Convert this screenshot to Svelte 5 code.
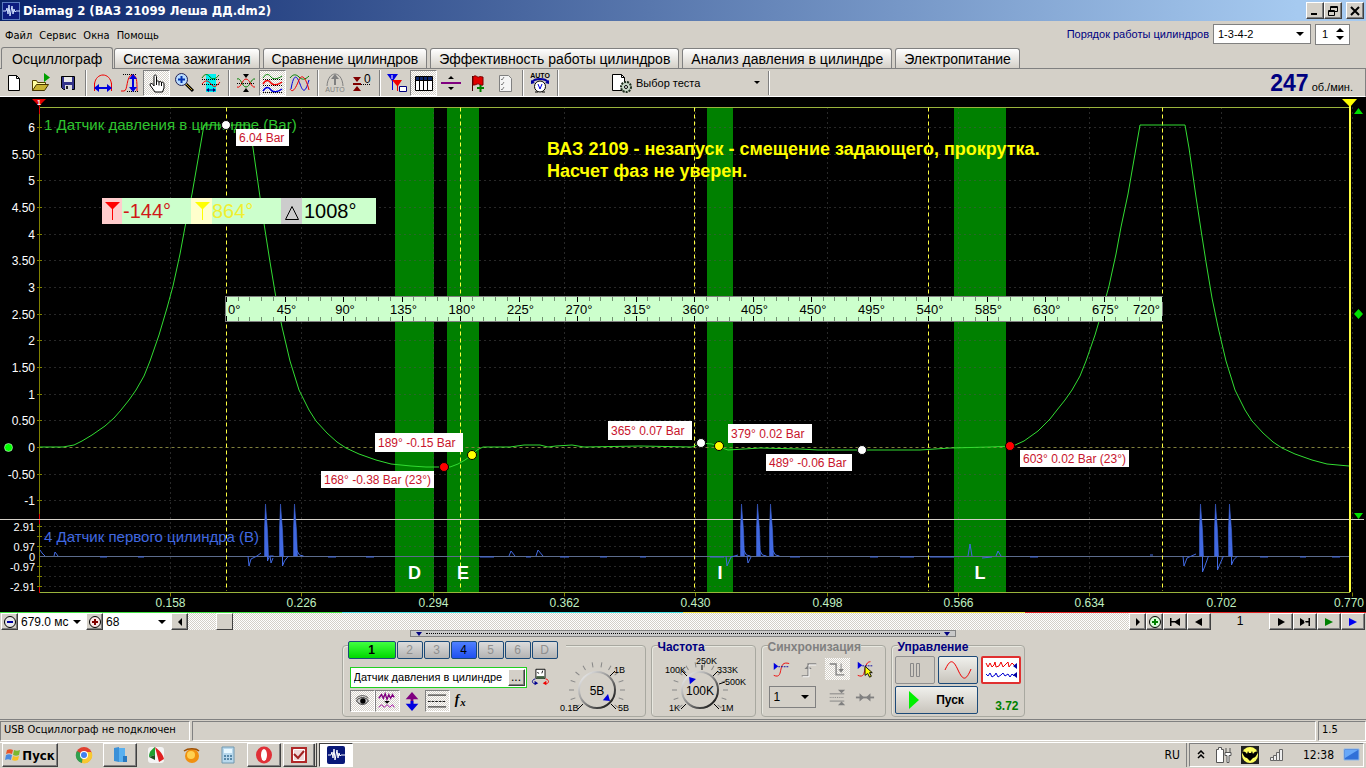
<script lang="ts">
  interface Tool {
    icon: string;
    title: string;
    pressed?: boolean;
  }

  const menu = ['Файл', 'Сервис', 'Окна', 'Помощь'];

  const tabs = [
    'Осциллограф',
    'Система зажигания',
    'Сравнение цилиндров',
    'Эффективность работы цилиндров',
    'Анализ давления в цилиндре',
    'Электропитание',
  ];
  let activeTab = $state(0);

  const toolGroups: Tool[][] = [
    [
      { icon: 'new', title: 'Новый' },
      { icon: 'open', title: 'Открыть' },
      { icon: 'save', title: 'Сохранить' },
    ],
    [
      { icon: 'scaleX', title: 'Масштаб по времени' },
      { icon: 'scaleY', title: 'Масштаб по уровню' },
      { icon: 'hand', title: 'Перемещение', pressed: true },
      { icon: 'zoom', title: 'Лупа' },
      { icon: 'region', title: 'Фрагмент' },
    ],
    [
      { icon: 'collapse', title: 'Совместить' },
      { icon: 'stack', title: 'Раздельно', pressed: true },
      { icon: 'overlay', title: 'Наложение' },
    ],
    [
      { icon: 'autoWave', title: 'Автомасштаб' },
      { icon: 'zero', title: 'Ноль' },
    ],
    [
      { icon: 'markers', title: 'Маркеры' },
      { icon: 'table', title: 'Таблица', pressed: true },
      { icon: 'level', title: 'Уровень' },
      { icon: 'flag', title: 'Закладка' },
      { icon: 'list', title: 'Список' },
    ],
    [{ icon: 'autoMeter', title: 'Авто' }],
  ];

  const icons: Record<string, string> = {
    new: '<path d="M5.500 3.500h8l3 3v12h-11z" fill="#fff" stroke="#000"/><path d="M13.500 3.500v3h3" fill="none" stroke="#000"/>',
    open: '<path d="M2.500 18.500v-10h4l1 2h8v2" fill="#ffffa0" stroke="#554400"/><path d="M2.500 18.500l4-6h12l-4 6z" fill="#c8b432" stroke="#443300"/><path d="M14 1l6 4.500-6 4.500z" fill="#00a000"/>',
    save: '<path d="M4.500 4.500h13v13h-11l-2-2z" fill="#33338a" stroke="#000"/><path d="M7 5h8v5H7z" fill="#e8e8e8"/><path d="M8 13h7v5H8z" fill="#ddd"/><path d="M9 14h2v3H9z" fill="#222"/>',
    scaleX: '<path d="M2.500 12C4 0 18 0 19.500 12" fill="none" stroke="#f00000"/><path d="M2.500 11v8M19.500 11v8" stroke="#f00000"/><path d="M3 16h16" stroke="#0000e0" stroke-width="2"/><path d="M2 16l5-4v8zM20 16l-5-4v8z" fill="#0000e0"/>',
    scaleY: '<path d="M2 19h3c4 0 2-15 8-16 5 0 5 6 5 16" fill="none" stroke="#f00000"/><path d="M4 2.500h14M8 19.500h12" stroke="#000" stroke-dasharray="1 1"/><path d="M14 6v11" stroke="#0000e0" stroke-width="2"/><path d="M14 2l-4 5h8zM14 20l-4-5h8z" fill="#0000e0"/>',
    hand: '<path d="M8 14V4.500c0-2 2.500-2 2.500 0V10c0-1.500 2.500-1.500 2.500.500 0-1.500 2.500-1.500 2.500.500 0-1.500 2.500-1 2.500 1v4l-1.500 4h-7.500l-5-7c0-2 2-2 3-.500z" fill="#fff" stroke="#000"/><path d="M10.500 10v3M13 10.500v3M15.500 11v3" stroke="#000"/>',
    zoom: '<circle cx="8.500" cy="7.500" r="6" fill="#b8dcff" stroke="#225"/><path d="M5 7.500h7M8.500 4v7" stroke="#0030b0" stroke-width="2"/><path d="M13 12l7 7" stroke="#000" stroke-width="3"/><path d="M13 12l6 6" stroke="#c8a020"/>',
    region: '<path d="M6 2h10v18H6z" fill="#00f0f0"/><path d="M2 6c3-5 6-4 8-1s6 2 9-2" fill="none" stroke="#008000"/><path d="M2 7.500h18M2 12.500h18" stroke="#000" stroke-dasharray="1 1"/><path d="M2 12c3-4 6-4 9 0s5 3 9-2" fill="none" stroke="#f00000"/><path d="M7 18h8" stroke="#000080"/><path d="M6 18l3-2v4zM16 18l-3-2v4z" fill="#000080"/>',
    collapse: '<path d="M2 7c4-2 5 8 9 8s5-9 9-8" fill="none" stroke="#008000"/><path d="M2 15c4 2 5-8 9-8s5 9 9 8" fill="none" stroke="#f00000"/><path d="M2 11.500h18" stroke="#000" stroke-dasharray="1 1"/><path d="M8 2h6l-3 4zM8 20h6l-3-4z" fill="#000"/>',
    stack: '<path d="M1 6c3-5 6-4 8-1s7 2 11-1" fill="none" stroke="#008000"/><path d="M1 12c3-5 6-4 8-1s7 2 11-1" fill="none" stroke="#f00000" stroke-width="1.500"/><path d="M1 19c3-5 6-4 8-1s7 2 11-1" fill="none" stroke="#0000e0" stroke-width="1.500"/><path d="M1 7.500h19M1 13.500h19M1 20.500h19" stroke="#000" stroke-dasharray="1 1"/>',
    overlay: '<path d="M1 6c3-4 6-4 9-1s6 3 10-1" fill="none" stroke="#008000"/><path d="M2 17C5 0 8 4 11 12s5 10 9-4" fill="none" stroke="#0000e0"/><path d="M1 17c3 5 6-2 9-9s7-2 10 10" fill="none" stroke="#f00000"/>',
    autoWave: '<path d="M3 14C4-2 18-2 19 14" fill="none" stroke="#808080"/><path d="M11 5v8" stroke="#808080" stroke-width="2"/><path d="M11 2L7 7h8z" fill="#808080"/><text x="11" y="20" font-size="7" text-anchor="middle" fill="#808080">AUTO</text>',
    zero: '<path d="M2 5h8l-4 5zM2 19h8l-4-5z" fill="#800000"/><path d="M2 12h8" stroke="#800000" stroke-width="2"/><path d="M10 12.500h10" stroke="#000" stroke-dasharray="1 1"/><text x="13" y="11" font-size="12" fill="#000">0</text>',
    markers: '<path d="M1 2h11l-5 7v9H6V9z" fill="#0000e0"/><path d="M6 8h10l-4 6v5h-1v-5z" fill="#f00000"/><path d="M13.500 14.500h7v5h-7z" fill="#fff" stroke="#000080"/><path d="M6 3v4" stroke="#fff"/>',
    table: '<path d="M2.500 4.500h17v14h-17z" fill="#fff" stroke="#000"/><path d="M3 5h16v3H3z" fill="#0a246a"/><path d="M3 8.500h16M6.500 5v13M10.500 5v13M14.500 5v13" stroke="#000"/>',
    level: '<path d="M1 11h20" stroke="#800080" stroke-width="2"/><path d="M8 7h6l-3-3zM8 15h6l-3 3z" fill="#000"/>',
    flag: '<path d="M5.500 4v15" stroke="#400"/><path d="M6 5c3-3 4 1 6 0s2 0 4 0v8c-3 1-4-2-6-1s-2 1-4 1z" fill="#e00000" stroke="#700"/><path d="M10 16h7M13.500 13v7" stroke="#008000" stroke-width="2"/>',
    list: '<path d="M5.500 3.500h9l3 3v13h-12z" fill="#f4f4f4" stroke="#808080"/><path d="M7 7l1 1 2-3M7 12l1 1 2-3M7 17l1 1 2-3" fill="none" stroke="#808080"/>',
    autoMeter: '<text x="11" y="6" font-size="7" font-weight="bold" text-anchor="middle" fill="#000">AUTO</text><path d="M3 10c3-4 13-4 16 0" fill="none" stroke="#0000a0" stroke-width="2"/><path d="M2 12V8l4 3zM20 12V8l-4 3z" fill="#0000a0"/><circle cx="11" cy="14.500" r="5.500" fill="#fff" stroke="#000"/><path d="M9 12l2 5 2-5" fill="none" stroke="#0000e0"/><path d="M6 20h3M13 20h3" stroke="#000"/>',
    test: '<path d="M1.500 2.500h9l3 3v13h-12z" fill="#fff" stroke="#000"/><path d="M10.500 2.500v3h3" fill="none" stroke="#000"/><circle cx="15" cy="15" r="5" fill="#c8d8c8" stroke="#203020" stroke-width="2" stroke-dasharray="2 1"/><circle cx="15" cy="15" r="1.500" fill="#fff" stroke="#000"/>',
    eye: '<path d="M5 11c2-5 11-5 13 0-3 5-10 5-13 0z" fill="#ccc" stroke="#222"/><circle cx="12" cy="11" r="3" fill="#000"/><path d="M4 9c3-5 11-5 14-1" fill="none" stroke="#444"/>',
    filter: '<path d="M2 8l3-4 2 4 2-5 2 6 2-5 2 4 2-4 2 3" fill="none" stroke="#800080" stroke-width="1.500"/><path d="M8 11h6l-3 3z" fill="#000"/><path d="M2 18l3-3 3 3 3-3 3 3 3-3 2 3" fill="none" stroke="#a000a0"/>',
    invert: '<path d="M11 5v13" stroke="#800080" stroke-width="3"/><path d="M11 1L4 9h14z" fill="#800080"/><path d="M11 22l-7-8h14z" fill="#0000e0"/><path d="M11 11v5" stroke="#0000e0" stroke-width="3"/>',
    lines: '<path d="M1 4.500h20M1 17.500h20" stroke="#000"/><path d="M1 11.500h20" stroke="#000" stroke-dasharray="3 1"/>',
    fx: '<text x="3" y="14" font-size="15" font-style="italic" font-weight="bold" font-family="Liberation Serif" fill="#000">f</text><text x="9" y="16" font-size="12" font-style="italic" font-weight="bold" font-family="Liberation Serif" fill="#000">x</text>',
    probe: '<path d="M6.500 2.500h10v10h-10z" fill="#fff" stroke="#000"/><path d="M7 10h9v3H7z" fill="#406040"/><path d="M8 6l2 1M14 4l-1 3" stroke="#000"/><path d="M6 13c-5 1-4 6 0 5" fill="none" stroke="#000090"/><path d="M5 15l4 3-4 2z" fill="#000090"/><path d="M17 13c5 1 4 6 0 5" fill="none" stroke="#f00000"/><path d="M18 15l-4 3 4 2z" fill="#f00000"/>',
    syncWave: '<path d="M3 18c7 3 7-3 8-7s2-8 9-6" fill="none" stroke="#f00000"/><path d="M3 4l5 4-5 4z" fill="#0000e0"/><path d="M8 8.500h12" stroke="#0000a0" stroke-dasharray="2 1"/>',
    edgeUp: '<path d="M3 18.500h7v-13h9" fill="none" stroke="#808080" stroke-width="1.500"/><path d="M10 7l-4 4h8z" fill="#808080"/><path d="M4 19.500h7v-13h8" fill="none" stroke="#fff"/>',
    edgeDown: '<path d="M3 5.500h7v12h9" fill="none" stroke="#808080" stroke-width="1.500"/><path d="M15.500 5v9" stroke="#808080"/><path d="M15.500 15l-3-4h6z" fill="#808080"/>',
    syncCursor: '<path d="M3 18c7 3 7-3 8-7s2-8 6-8" fill="none" stroke="#f00000"/><path d="M3 3l5 4-5 4z" fill="#0000e0"/><path d="M8 7.500h12" stroke="#0000a0" stroke-dasharray="2 1"/><path d="M11 8v10l3-2 2 4 2-1-2-4h3z" fill="#ffff00" stroke="#000"/>',
    syncLevel: '<path d="M3 7.500h16M3 15.500h16" stroke="#808080"/><path d="M3 11.500h16" stroke="#808080" stroke-dasharray="1 1"/><path d="M12 3h8l-4 4zM12 20h8l-4-4z" fill="#808080"/>',
    syncHold: '<path d="M1 11.500h20" stroke="#808080" stroke-width="2"/><path d="M5 7l5 4.500L5 16zM17 7l-5 4.500 5 4.500z" fill="#808080"/>',
  };

  // scope geometry, in drawing units
  const LEFT = 39.5;
  const RIGHT = 1350;
  const TOP = 107.5;
  const BOTTOM = 592.5;
  const SPLIT = 519.5;
  const ZERO = 447.5;
  const ZERO4 = 556.5;

  const pressureTicks = [
    '6', '5.50', '5', '4.50', '4', '3.50', '3', '2.50', '2', '1.50', '1', '0.50', '0', '-0.50', '-1',
  ].map((text) => ({ text, y: Math.round(447 - (Number(text) * 160) / 3) + 0.5 }));

  const syncTicks = [
    { text: '2.91', y: 526.5 },
    { text: '0.97', y: 546.5 },
    { text: '0', y: 556.5 },
    { text: '-0.97', y: 566.5 },
    { text: '-2.91', y: 586.5 },
  ];
  const syncGrid = [526.5, 536.5, 546.5, 566.5, 576.5, 586.5];

  const timeTicks = ['0.158', '0.226', '0.294', '0.362', '0.430', '0.498', '0.566', '0.634', '0.702', '0.770'].map(
    (text, i) => ({ text, x: Math.round(170 + (i * 394) / 3) + 0.5 })
  );

  const phases = [
    { x: 395, w: 39, name: 'D' },
    { x: 447, w: 32, name: 'E' },
    { x: 707, w: 26, name: 'I' },
    { x: 954, w: 52, name: 'L' },
  ];

  const strokes = [226.5, 460.5, 694.5, 928.5, 1162.5];

  const rise = [
    [121, 410], [129, 400], [136, 390], [144, 376], [150, 361], [159, 335], [167, 308], [173, 286],
    [180, 254], [185, 227], [192, 194], [204, 125], [249, 125],
  ];
  const fall = [
    [249, 125], [253, 148], [260, 197], [265, 230], [270, 262], [276, 298], [282, 327], [290, 361], [299, 390],
    [309, 410], [316, 421], [327, 433], [337, 442], [346, 448], [359, 454], [376, 460], [391, 464],
  ];
  const nextCycle = (pts: number[][]) => pts.map(([x, y]) => [x + 936, y]);

  const pressure = [
    [40, 447], [63, 447], [74, 445], [82, 441], [92, 435], [105, 426], [114, 418],
    ...rise, ...fall,
    [411, 466], [426, 467], [450, 467], [458, 464], [465, 460], [472, 455], [477, 450], [483, 447],
    [510, 447], [524, 445], [540, 445], [548, 447], [556, 446], [572, 445], [584, 447], [640, 446], [692, 447],
    [701, 443], [712, 444], [722, 448], [728, 450], [760, 448], [800, 449], [818, 450], [920, 450], [950, 448], [990, 447],
    [1013, 446], [1024, 441], [1038, 431], [1050, 419],
    ...nextCycle(rise), ...nextCycle(fall), [1349, 466],
  ].map((p) => p.join(',')).join(' ');

  // x of each spike and how low it swings afterwards
  const pulses = [
    [265.5, 561], [280.5, 566], [294.5, 556], [741.5, 556], [757.5, 556], [770.5, 556],
    [1200.5, 572], [1215.5, 570], [1229.5, 565],
  ];
  const spikePath = pulses.map(([x]) => `M${x - 1} 556V528L${x} 504L${x + 2} 530L${x + 3} 556z`).join('');
  const tailPath = pulses
    .map(([x, low]) => (low > 556 ? `M${x + 2} 556V${low}l2 -5L${x + 8} 556` : `M${x + 2} 550l3 5l4 1`))
    .join('');
  const noisePath =
    'M40 550l2 3 3 3M54 556l1-4 3 4M100 557h7M138 557h6M248 556l1 10 2-7 6-3 4-3M270 556l1 7 2-5M328 557h8M366 557h8' +
    'M480 557h14M509 556l2-5 4 5M526 557h5M536 556l2-6 5 6M560 557h9M600 557h7M640 557h6' +
    'M710 557h14M726 556l1 10 4-9 7-2M747 556l1 7 3-6M790 557h10M870 557h8M900 557h14M930 557h24M968 556l2-12 2 12M982 558l10-1' +
    'M996 556l2-5 3 5M1030 557h8M1150 555h3M1183 556l1 10 3-8 9-4M1260 557h8M1300 557h6M1332 557h8';

  const ruler = Array.from({ length: 81 }, (_, i) => ({ x: Math.round(226 + i * 11.7) + 0.5, major: i % 5 === 0 }));
  const angles = Array.from({ length: 17 }, (_, i) => i * 45);

  const dots = [
    { x: 226, y: 125, fill: '#fff' },
    { x: 444, y: 467, fill: '#f00' },
    { x: 472, y: 455, fill: '#ff0' },
    { x: 701, y: 443, fill: '#fff' },
    { x: 719, y: 446, fill: '#ff0' },
    { x: 862, y: 450, fill: '#fff' },
    { x: 1010, y: 446, fill: '#f00' },
  ];

  const notes = [
    { x: 236, y: 129, w: 53, h: 17, text: '6.04 Bar' },
    { x: 375, y: 433, w: 88, h: 19, text: '189° -0.15 Bar' },
    { x: 321, y: 471, w: 113, h: 17, text: '168° -0.38 Bar (23°)' },
    { x: 608, y: 421, w: 84, h: 19, text: '365° 0.07 Bar' },
    { x: 728, y: 424, w: 84, h: 19, text: '379° 0.02 Bar' },
    { x: 766, y: 454, w: 86, h: 17, text: '489° -0.06 Bar' },
    { x: 1020, y: 450, w: 109, h: 17, text: '603° 0.02 Bar (23°)' },
  ];

  const channels = ['1', '2', '3', '4', '5', '6', 'D'];

  // short scale marks around a knob, angle in degrees from the top
  const knobMarks = Array.from({ length: 14 }, (_, i) => -130 + i * 20);
</script>

{#snippet icon(name: string)}
  <svg class="icon" viewBox="0 0 22 22" aria-hidden="true">{@html icons[name]}</svg>
{/snippet}

{#snippet knob(value: string, pointer: number)}
  {#each knobMarks as a}
    <path d="M45 13v-5" stroke="#888" transform="rotate({a} 45 36)" />
  {/each}
  <circle cx="45" cy="36" r="18" fill="#d4d0c8" stroke="url(#rim)" stroke-width="2" />
  <path d="M41 25h8l-4-6z" fill="#0000e0" transform="rotate({pointer} 45 36)" />
  <text class="value" x="45" y="41">{value}</text>
{/snippet}

<div class="window">
  <header class="titlebar">
    <svg class="logo" viewBox="0 0 18 18" aria-hidden="true">
      <rect width="18" height="18" fill="#5a7ac0" />
      <rect x="1" y="1" width="16" height="16" fill="#0c1c80" />
      <path d="M1 9h3l1-3 1 6 1-9 1 11 2-10 1 8 1-5 1 3 1-1h4" fill="none" stroke="#cfe0ff" />
    </svg>
    <h1>Diamag 2 (ВАЗ 21099 Леша ДД.dm2)</h1>
    <div class="controls">
      <button aria-label="Свернуть"><svg viewBox="0 0 12 12"><path d="M2 9h6" stroke="#000" stroke-width="2" /></svg></button>
      <button aria-label="Восстановить">
        <svg viewBox="0 0 12 12"><path d="M3.500 5V1.500h7v5H8M1.500 5.500h6v5h-6zM3 2.500h8M1 6.500h7" fill="none" stroke="#000" /></svg>
      </button>
      <button class="close" aria-label="Закрыть"><svg viewBox="0 0 12 12"><path d="M2 2l8 8M10 2l-8 8" stroke="#000" stroke-width="2" /></svg></button>
    </div>
  </header>

  <div class="menubar">
    <nav>
      {#each menu as item}
        <button>{item}</button>
      {/each}
    </nav>
    <div class="order">
      <label for="order">Порядок работы цилиндров</label>
      <select id="order" class="combo order-select">
        <option>1-3-4-2</option>
      </select>
      <div class="spin">
        <input aria-label="Цилиндр" value="1" />
        <svg viewBox="0 0 8 14" aria-hidden="true"><path d="M0 5h8L4 1zM0 9h8l-4 4z" /></svg>
      </div>
    </div>
  </div>

  <div class="tabs" role="tablist">
    {#each tabs as tab, i}
      <button role="tab" aria-selected={i === activeTab} class:active={i === activeTab} onclick={() => (activeTab = i)}>{tab}</button>
    {/each}
  </div>

  <div class="toolbar">
    {#each toolGroups as group}
      <div class="tools">
        {#each group as tool}
          <button class="tool" class:pressed={tool.pressed} title={tool.title}>{@render icon(tool.icon)}</button>
        {/each}
      </div>
    {/each}
    <button class="test">
      {@render icon('test')}
      <span>Выбор теста</span>
      <svg class="arrow" viewBox="0 0 6 4" aria-hidden="true"><path d="M0 0h6L3 3z" /></svg>
    </button>
    <div class="rpm"><b>247</b><span>об./мин.</span></div>
  </div>

  <main class="scope">
    <svg viewBox="0 97 1366 515" role="img" aria-label="Осциллограмма">
      <rect y="97" width="1366" height="515" fill="#000" />

      {#each phases as p}
        <rect x={p.x} y="108" width={p.w} height="484" fill="#008000" />
      {/each}

      <g class="grid">
        {#each pressureTicks as t}
          <path d="M{LEFT} {t.y}H{RIGHT}" class:zero={t.text === '0'} />
        {/each}
        {#each syncGrid as y}
          <path d="M{LEFT} {y}H{RIGHT}" />
        {/each}
        {#each timeTicks as t}
          <path d="M{t.x} {TOP}V{BOTTOM}" />
        {/each}
      </g>

      <g class="axis">
        <path d="M{LEFT} {TOP}V{BOTTOM}" />
        {#each pressureTicks as t}
          <path d="M37 {t.y}h5" />
        {/each}
        {#each syncGrid as y}
          <path d="M37 {y}h5" />
        {/each}
        {#each timeTicks as t}
          <path d="M{t.x} {BOTTOM}v4" />
        {/each}
      </g>
      <path d="M{LEFT} {TOP}H{RIGHT}M{LEFT} {BOTTOM}H{RIGHT}" stroke="#9ab43c" />
      <path d="M{LEFT} 514v10M{LEFT} 587v6M{LEFT} 106v8" stroke="#e00000" />

      <g class="scale">
        {#each pressureTicks as t}
          <text x="35" y={t.y + 4}>{t.text}</text>
        {/each}
        {#each syncTicks as t}
          <text class="dense" x="35" y={t.y + 4}>{t.text}</text>
        {/each}
      </g>
      <g class="time">
        {#each timeTicks as t, i}
          {#if i === timeTicks.length - 1}
            <text class="last" x="1364" y="607">{t.text}</text>
          {:else}
            <text x={t.x} y="607">{t.text}</text>
          {/if}
        {/each}
      </g>

      <text class="trace" x="44" y="130" fill="#2fc52f">1 Датчик давления в цилиндре (Bar)</text>
      <text class="trace" x="44" y="542" fill="#4169e1">4 Датчик первого цилиндра (В)</text>

      <path d="M0 {SPLIT}H1364" stroke="#d4d0c8" />
      <path d="M{LEFT} {ZERO4}H{RIGHT}" stroke="#5c6c8c" />
      <path d="{noisePath}{tailPath}" fill="none" stroke="#4169e1" />
      <path d={spikePath} fill="#4169e1" stroke="#4169e1" stroke-width="0.500" />
      {#each strokes as x}
        <path d="M{x} {TOP}V591" stroke="#ffff40" stroke-dasharray="4 3" />
      {/each}
      <polyline points={pressure} fill="none" stroke="#32dc32" />

      {#each phases as p}
        <text class="phase" x={p.x + p.w / 2} y="579">{p.name}</text>
      {/each}

      <!-- markers -->
      <path d="M32 99h14l-7 7z" fill="#e00000" />
      <text x="39" y="105" font-size="7" font-weight="bold" text-anchor="middle" fill="#fff">1</text>
      <path d="M1350 106V592" stroke="#ffff40" stroke-width="2" />
      <path d="M1342 99h15l-7 8z" fill="#ff0" />
      <path d="M1354 114h9l-4.500-6zM1354 513h9l-4.500 6zM1358.500 309l4.500 5-4.500 5-4.500-5z" fill="#00e000" />
      <circle cx="8.500" cy={ZERO} r="4" fill="#00ff00" stroke="#fff" stroke-width="0.500" />

      {#each dots as d}
        <circle cx={d.x} cy={d.y} r="4.500" fill={d.fill} stroke="#000" />
      {/each}

      <!-- cursor readout -->
      <g class="readout">
        <rect x="102" y="198" width="274" height="26" fill="#ccffcc" />
        <rect x="102" y="198" width="20" height="26" fill="#ffcccc" />
        <rect x="191" y="198" width="21" height="26" fill="#ffffcc" />
        <rect x="281" y="198" width="21" height="26" fill="#ccc" />
        <path d="M105 202h15l-7 7v11h-1v-11z" fill="#f00" />
        <path d="M195 202h15l-7 7v11h-1v-11z" fill="#ff0" />
        <path d="M285.500 219.500h13l-6.500-13z" fill="none" stroke="#000" />
        <text x="123" y="218" fill="#d01818">-144°</text>
        <text x="212" y="218" fill="#f0f030">864°</text>
        <text x="304" y="218" fill="#000">1008°</text>
      </g>

      <!-- degree ruler -->
      <rect x="225.500" y="296.500" width="937" height="25" fill="#ccffcc" stroke="#808080" />
      {#each ruler as r}
        <path d="M{r.x} 297v{r.major ? 5 : 4}M{r.x} 321v-{r.major ? 5 : 4}" stroke={r.major ? '#000' : '#709070'} />
      {/each}
      <g class="angles">
        {#each angles as a, i}
          {#if i === 0}
            <text x="228" y="314" text-anchor="start">{a}°</text>
          {:else if i === 16}
            <text x="1160" y="314" text-anchor="end">{a}°</text>
          {:else}
            <text x={228 + i * 58.5} y="314" text-anchor="middle">{a}°</text>
          {/if}
        {/each}
      </g>

      {#each notes as n}
        <rect x={n.x} y={n.y} width={n.w} height={n.h} fill="#fff" />
        <text class="note" x={n.x + 3} y={Math.round(n.y + n.h / 2 + 4)}>{n.text}</text>
      {/each}

      <g class="comment">
        <text x="547" y="155">ВАЗ 2109 - незапуск - смещение задающего, прокрутка.</text>
        <text x="547" y="177">Насчет фаз не уверен.</text>
      </g>
    </svg>
  </main>

  <div class="overview"><i></i><i></i><i></i><i></i></div>

  <div class="scroller">
    <button class="raised" aria-label="Уменьшить">
      <svg viewBox="0 0 14 14"><circle cx="7" cy="7" r="5.500" fill="#e8e8e8" stroke="#000" /><path d="M4 7h6" stroke="#0000a0" stroke-width="2" /></svg>
    </button>
    <select class="flat" aria-label="Длительность"><option>679.0 мс</option></select>
    <button class="raised" aria-label="Увеличить">
      <svg viewBox="0 0 14 14"><circle cx="7" cy="7" r="5.500" fill="#ffe8e8" stroke="#000" /><path d="M4 7h6M7 4v6" stroke="#800000" stroke-width="2" /></svg>
    </button>
    <select class="flat" aria-label="Масштаб"><option>68</option></select>
    <button class="raised" aria-label="Влево"><svg viewBox="0 0 14 14"><path d="M9 3v8L5 7z" /></svg></button>
    <div class="track"><div class="thumb"></div></div>
    <button class="raised" aria-label="Вправо"><svg viewBox="0 0 14 14"><path d="M5 3v8l4-4z" /></svg></button>
    <button class="raised" aria-label="Добавить кадр">
      <svg viewBox="0 0 14 14"><circle cx="7" cy="7" r="5.500" fill="#d8ffd8" stroke="#000" /><path d="M4 7h6M7 4v6" stroke="#008000" stroke-width="2" /></svg>
    </button>
    <button class="raised wide" aria-label="Первый кадр"><svg viewBox="0 0 14 14"><path d="M12 3v8L6 7zM2 3h1.500v8H2zM3 6h5v1.500H3z" /></svg></button>
    <button class="raised wide" aria-label="Предыдущий кадр"><svg viewBox="0 0 14 14"><path d="M10 3v8L3 7z" /></svg></button>
    <output>1</output>
    <button class="raised wide" aria-label="Следующий кадр"><svg viewBox="0 0 14 14"><path d="M4 3v8l7-4z" /></svg></button>
    <button class="raised wide" aria-label="Последний кадр"><svg viewBox="0 0 14 14"><path d="M2 3v8l6-4zM10.500 3H12v8h-1.500zM6 6h5v1.500H6z" /></svg></button>
    <button class="raised wide" aria-label="Воспроизвести"><svg viewBox="0 0 14 14"><path d="M3 3v8l8-4z" fill="#008000" /></svg></button>
    <button class="raised wide" aria-label="Запись"><svg viewBox="0 0 14 14"><path d="M3 3v8l8-4z" fill="#0000f0" /></svg></button>
  </div>

  <button class="splitter" aria-label="Скрыть панель">
    <svg viewBox="0 0 6 4"><path d="M0 0h6L3 4z" /></svg>
    <span></span>
    <svg viewBox="0 0 6 4"><path d="M0 0h6L3 4z" /></svg>
  </button>

  <section class="panel">
    <div class="group channel" role="group" aria-label="Канал">
      <div class="channels">
        {#each channels as c, i}
          <button class:first={i === 0} class:blue={i === 3}>{c}</button>
        {/each}
      </div>
      <div class="channel-settings">
        <div class="row">
          <div class="sensor">
            <input aria-label="Датчик" value="Датчик давления в цилиндре" />
            <button class="raised" aria-label="Выбрать датчик">...</button>
          </div>
          <button class="tool small" title="Датчик">{@render icon('probe')}</button>
        </div>
        <div class="row">
          <button class="tool small pressed" title="Видимость">{@render icon('eye')}</button>
          <button class="tool small pressed" title="Фильтр">{@render icon('filter')}</button>
          <button class="tool small" title="Инверсия">{@render icon('invert')}</button>
          <button class="tool small pressed" title="Линии">{@render icon('lines')}</button>
          <button class="tool small" title="Функция">{@render icon('fx')}</button>
        </div>
      </div>
      <svg class="knob" viewBox="0 0 90 66" role="img" aria-label="Предел 5В">
        <defs>
          <linearGradient id="rim" x1="0" y1="0" x2="1" y2="1">
            <stop offset="0" stop-color="#fff" />
            <stop offset="0.500" stop-color="#888" />
            <stop offset="1" stop-color="#000" />
          </linearGradient>
        </defs>
        {@render knob('5В', 130)}
        <path d="M58 22l5-5M31 50l-5 5M59 50l5 5" stroke="#000" />
        <text x="62" y="19">1В</text>
        <text x="8" y="57">0.1В</text>
        <text x="66" y="57">5В</text>
      </svg>
    </div>

    <div class="group rate" role="group" aria-label="Частота">
      <span class="caption">Частота</span>
      <svg class="knob" viewBox="0 0 90 66" role="img" aria-label="Частота 100K">
        {@render knob('100K', -40)}
        <path d="M47 16v-5M32 22l-5-5M58 22l5-5M64 30l6-2M31 50l-5 5M59 50l5 5" stroke="#000" />
        <text x="41" y="10">250K</text>
        <text x="10" y="19">100K</text>
        <text x="62" y="19">333K</text>
        <text x="70" y="31">500K</text>
        <text x="14" y="57">1K</text>
        <text x="66" y="57">1M</text>
      </svg>
    </div>

    <div class="group sync" role="group" aria-label="Синхронизация">
      <span class="caption">Синхронизация</span>
      <div class="row">
        <button class="tool small" title="Уровень">{@render icon('syncWave')}</button>
        <button class="tool small" title="Фронт">{@render icon('edgeUp')}</button>
        <button class="tool small hatched" title="Спад">{@render icon('edgeDown')}</button>
        <button class="tool small" title="Захват">{@render icon('syncCursor')}</button>
      </div>
      <div class="row">
        <select class="combo source" aria-label="Источник"><option>1</option></select>
        <button class="tool small" title="Порог">{@render icon('syncLevel')}</button>
        <button class="tool small" title="Удержание">{@render icon('syncHold')}</button>
      </div>
    </div>

    <div class="group control" role="group" aria-label="Управление">
      <span class="caption">Управление</span>
      <div class="row">
        <button class="mode off" aria-label="Пауза">
          <svg viewBox="0 0 36 24"><path d="M13.500 5.500h3v13h-3zM19.500 5.500h3v13h-3z" fill="none" stroke="#888" /></svg>
        </button>
        <button class="mode" aria-label="Одиночный">
          <svg viewBox="0 0 36 24"><path d="M5 12C10 1 13 1 18 12s8 11 13-1" fill="none" stroke="#f00000" /></svg>
        </button>
        <button class="mode on" aria-label="Непрерывный">
          <svg viewBox="0 0 36 24">
            <path d="M3 5l2 4 2-4 2 4 2-2 1-3 1 5 3-1 2-4 2 5 2-2 3-3 1 5 3-4 3 3" fill="none" stroke="#f00000" />
            <path d="M3 16l2 2 2-3 2 4 3-2 1-2 2 4 3-2 2-2 2 3 3-2 2 3 2-3 2 2" fill="none" stroke="#0000d0" />
            <path d="M34 5l-4 3 4 3zM34 14l-4 3 4 3z" fill="#0000a0" />
          </svg>
        </button>
      </div>
      <div class="row">
        <button class="mode start"><svg viewBox="0 0 12 20" aria-hidden="true"><path d="M1 1v18l10-9z" fill="#00f000" /></svg><b>Пуск</b></button>
        <output class="version">3.72</output>
      </div>
    </div>
  </section>

  <footer class="status">
    <span class="state">USB Осциллограф не подключен</span>
    <span class="fill"></span>
    <span class="build">1.5</span>
  </footer>

  <div class="taskbar">
    <button class="raised go">
      <svg viewBox="0 0 16 16" aria-hidden="true">
        <path d="M2 3c2-1 4-1 6 0L7 7C5 6 3 6 1 7z" fill="#e8552a" />
        <path d="M9 3c2 1 4 1 6 0l-1 5c-2 1-4 1-6 0z" fill="#7ab82e" />
        <path d="M1 8c2-1 4-1 6 0l-1 5c-2-1-4-1-6 0z" fill="#4a8ae0" />
        <path d="M8 9c2 1 4 1 6 0l-1 4c-2 1-4 1-6 0z" fill="#f8c020" />
      </svg>
      <b>Пуск</b>
    </button>
    <button class="task" aria-label="Chrome">
      <svg viewBox="0 0 18 18">
        <circle cx="9" cy="9" r="8" fill="#e04030" />
        <path d="M9 9L2 5a8 8 0 0 0 5 12z" fill="#30a050" />
        <path d="M9 9h-1l-1 8A8 8 0 0 0 16.500 6H9z" fill="#f8c830" />
        <circle cx="9" cy="9" r="4" fill="#fff" /><circle cx="9" cy="9" r="3" fill="#4080f0" />
      </svg>
    </button>
    <button class="task raised" aria-label="Проводник">
      <svg viewBox="0 0 18 18"><path d="M3 2l5-1v15l-5-1z" fill="#3a90d8" /><path d="M8 2h6v14H8z" fill="#58b0f0" /><path d="M12 10h4v6h-4z" fill="#2878c0" /></svg>
    </button>
    <button class="task" aria-label="FastStone">
      <svg viewBox="0 0 18 18"><rect x="1" y="1" width="16" height="16" rx="3" fill="#f4f4f4" /><path d="M2 11C2 6 4 4 8 1v8z" fill="#20a030" /><path d="M8 1c4 3 8 7 9 12l-5 3z" fill="#e02020" /><path d="M2 11l6-2v5z" fill="#205020" /></svg>
    </button>
    <button class="task" aria-label="Плеер">
      <svg viewBox="0 0 18 18"><circle cx="9" cy="10" r="7" fill="#f09010" /><circle cx="8" cy="9" r="4" fill="#ffd050" /><path d="M1 5c4-3 12-3 15 0" fill="none" stroke="#a05000" stroke-width="1.500" /></svg>
    </button>
    <button class="task" aria-label="Калькулятор">
      <svg viewBox="0 0 18 18"><path d="M3 1h12v16H3z" fill="#b8d8ec" stroke="#7098b0" /><path d="M5 3h8v4H5z" fill="#e8f8ff" /><path d="M5 10h8M5 13h8" stroke="#5888a8" stroke-width="2" stroke-dasharray="2 1" /></svg>
    </button>
    <button class="task raised" aria-label="Opera">
      <svg viewBox="0 0 18 18"><ellipse cx="9" cy="9" rx="8" ry="8.500" fill="#e03038" /><ellipse cx="9" cy="9" rx="3" ry="6" fill="#fff" /></svg>
    </button>
    <button class="task raised double" aria-label="Журнал">
      <svg viewBox="0 0 18 18"><rect x="1" y="1" width="16" height="16" fill="#b02828" /><path d="M3.500 3.500h11v11h-11z" fill="#f0d8d8" stroke="#fff" /><path d="M4 8l4 4 6-7" fill="none" stroke="#a02020" stroke-width="2" /></svg>
    </button>
    <button class="task current" aria-label="Diamag 2">
      <svg viewBox="0 0 18 18"><rect width="18" height="18" rx="2" fill="#081878" /><path d="M1 9h3l1-3 1 6 1-9 1 11 2-10 1 8 1-5 1 3 1-1h4" fill="none" stroke="#fff" /></svg>
    </button>
    <span class="lang">RU</span>
    <div class="tray">
      <svg class="chevron" viewBox="0 0 8 10" aria-hidden="true"><path d="M1 4l3-3 3 3M1 8l3-3 3 3" fill="none" stroke="#000" stroke-width="1.500" /></svg>
      <svg viewBox="0 0 18 18" aria-hidden="true"><path d="M2.500 3.500h2v-2h3v2h2v13h-7z" fill="#fff" stroke="#555" /><path d="M12 2v4M16 2v4M11 6.500h6v3h-2v7h-2v-7h-2z" fill="#fff" stroke="#555" /></svg>
      <svg viewBox="0 0 18 18" aria-hidden="true"><rect width="18" height="18" fill="#202020" /><ellipse cx="9" cy="9" rx="8" ry="8" fill="#ffff60" /><path d="M1 6c2-1 4 0 5 2l1-3 1 2h2l1-2 1 3c1-2 3-3 5-2-1 3-3 6-5 6l-3 3-3-3c-2 0-4-3-5-6z" fill="#000" /></svg>
      <svg viewBox="0 0 18 18" aria-hidden="true"><path d="M2.500 14.500v-3h3v3zM5.500 14.500v-5h3v5zM8.500 14.500v-8h3v8zM11.500 14.500v-11h3v11z" fill="#eee" stroke="#666" /></svg>
      <time>12:38</time>
      <svg viewBox="0 0 18 18" aria-hidden="true"><path d="M1 3h15v11H1z" fill="#3070d8" stroke="#90b8e8" /><path d="M2 4h13L2 12z" fill="#68a8f8" /></svg>
    </div>
  </div>
</div>

<style>
  :global(body) {
    margin: 0;
    background: #d4d0c8;
  }
  .window {
    min-height: 100vh;
    display: flex;
    flex-direction: column;
    background: #d4d0c8;
    font-family: 'Liberation Sans', Arial, sans-serif;
    font-size: 12px;
    color: #000;
  }
  button,
  select,
  input {
    font: inherit;
    color: inherit;
    margin: 0;
    padding: 0;
    border: 0;
    border-radius: 0;
    background: none;
    box-sizing: border-box;
  }
  svg {
    display: block;
    flex-shrink: 0;
  }

  /* title */
  .titlebar {
    display: flex;
    align-items: center;
    height: 21px;
    padding: 0 2px;
    background: linear-gradient(to right, #0a246a, #a6caf0 95%);
    color: #fff;
  }
  .logo {
    width: 18px;
    height: 18px;
  }
  h1 {
    margin: 0 0 0 3px;
    font-family: 'DejaVu Sans Condensed', 'DejaVu Sans', sans-serif;
    font-size: 13px;
    font-weight: bold;
  }
  .controls {
    display: flex;
    margin-left: auto;
  }
  .controls button,
  .raised {
    display: flex;
    align-items: center;
    justify-content: center;
    background: #d4d0c8;
    border: 1px solid;
    border-color: #fff #404040 #404040 #fff;
    box-shadow: inset -1px -1px 0 #808080;
  }
  .controls button {
    width: 18px;
    height: 17px;
  }
  .controls .close {
    margin-left: 4px;
  }
  .controls svg {
    width: 12px;
    height: 12px;
  }

  /* menu */
  .menubar {
    display: flex;
    align-items: center;
    justify-content: space-between;
    height: 26px;
    padding: 0 16px 0 5px;
  }
  nav {
    display: flex;
    gap: 7px;
    padding-top: 2px;
    font-family: 'DejaVu Sans Condensed', 'DejaVu Sans', sans-serif;
    font-size: 11px;
  }
  .order {
    display: flex;
    align-items: center;
    gap: 4px;
    font-size: 11px;
    color: #000080;
  }
  .combo {
    appearance: none;
    height: 20px;
    padding: 0 4px;
    background: #fff url("data:image/svg+xml,%3Csvg xmlns='http://www.w3.org/2000/svg' width='8' height='4'%3E%3Cpath d='M0 0h8L4 4z'/%3E%3C/svg%3E") no-repeat right 6px center;
    border: 1px solid #808080;
    color: #000;
  }
  .order-select {
    width: 98px;
  }
  .spin {
    display: flex;
    align-items: center;
    width: 35px;
    height: 21px;
    box-sizing: border-box;
    padding-left: 6px;
    background: #fff;
    border: 1px solid #808080;
    color: #000;
  }
  .spin input {
    width: 14px;
  }
  .spin svg {
    width: 8px;
    height: 14px;
  }

  /* tabs */
  .tabs {
    display: flex;
    align-items: flex-end;
    gap: 3px;
    height: 21px;
    padding-left: 1px;
    border-bottom: 1px solid #808080;
  }
  .tabs button {
    height: 20px;
    padding: 0 8px;
    font-size: 14px;
    white-space: nowrap;
    background: linear-gradient(#fff, #d4d0c8);
    border: 1px solid #808080;
    border-bottom: 0;
    border-radius: 3px 3px 0 0;
  }
  .tabs .active {
    height: 22px;
    margin: 0 -2px -1px 0;
    padding: 0 10px;
    background: #d4d0c8;
  }

  /* toolbar */
  .toolbar {
    display: flex;
    align-items: center;
    height: 27px;
    padding-right: 12px;
    border-bottom: 1px solid #fff;
    border-right: 1px solid #808080;
  }
  .tools {
    display: flex;
    padding-right: 4px;
    margin-right: 3px;
    border-right: 1px solid #808080;
    box-shadow: 1px 0 0 #fff;
  }
  .tool {
    display: flex;
    align-items: center;
    justify-content: center;
    width: 27px;
    height: 26px;
    border: 1px solid transparent;
  }
  .tool.small {
    width: 25px;
    height: 22px;
  }
  .pressed,
  .hatched,
  .track {
    background: repeating-conic-gradient(#d4d0c8 0 25%, #fff 0 50%) 0 0 / 2px 2px;
  }
  .tool.pressed {
    border-color: #808080 #fff #fff #808080;
  }
  .icon {
    width: 22px;
    height: 22px;
  }
  .small .icon {
    width: 20px;
    height: 20px;
  }
  .test {
    display: flex;
    align-items: center;
    gap: 3px;
    width: 158px;
    height: 24px;
    margin-left: 50px;
    padding-right: 8px;
    font-size: 11px;
    border-right: 1px solid #808080;
    box-shadow: 1px 0 0 #fff;
  }
  .arrow {
    width: 6px;
    height: 4px;
    margin-left: auto;
  }
  .rpm {
    display: flex;
    align-items: baseline;
    gap: 3px;
    margin-left: auto;
    font-size: 11px;
  }
  .rpm b {
    font-size: 23px;
    line-height: 26px;
    color: #000080;
  }

  /* scope */
  .scope {
    background: #000;
  }
  .scope svg {
    width: 100%;
    height: auto;
  }
  .grid path {
    stroke: #505050;
    stroke-dasharray: 1 4;
  }
  .grid .zero {
    stroke: #80803c;
    stroke-dasharray: 3 3;
  }
  .axis path {
    stroke: #808000;
  }
  .scale text {
    font-size: 12px;
    text-anchor: end;
    fill: #fff;
  }
  .scale .dense {
    font-size: 11px;
  }
  .time text {
    font-size: 12px;
    text-anchor: middle;
    fill: #c0f0c0;
  }
  .time .last {
    text-anchor: end;
  }
  .trace {
    font-size: 15px;
  }
  .phase {
    font-size: 18px;
    font-weight: bold;
    text-anchor: middle;
    fill: #fff;
  }
  .readout text {
    font-size: 20px;
  }
  .angles text {
    font-size: 13px;
  }
  .note {
    font-size: 12px;
    fill: #c8142c;
  }
  .comment text {
    font-size: 18px;
    font-weight: bold;
    fill: #ffff00;
  }

  /* frame overview and scroller */
  .overview {
    display: flex;
    height: 1px;
  }
  .overview i {
    flex: 1;
    background: #40e040;
  }
  .overview i:nth-child(2) {
    background: #40e0e0;
  }
  .overview i:nth-child(3) {
    background: #f0e040;
  }
  .overview i:nth-child(4) {
    background: #e02020;
  }
  .scroller {
    display: flex;
    height: 17px;
    padding: 0 1px;
  }
  .scroller .raised {
    width: 17px;
  }
  .scroller .wide {
    width: 24px;
  }
  .raised svg {
    width: 14px;
    height: 14px;
  }
  .flat {
    appearance: none;
    width: 68px;
    padding-left: 3px;
    background: #fff url("data:image/svg+xml,%3Csvg xmlns='http://www.w3.org/2000/svg' width='8' height='4'%3E%3Cpath d='M0 0h8L4 4z'/%3E%3C/svg%3E") no-repeat right 5px center;
  }
  .track {
    flex: 1;
    padding-left: 28px;
  }
  .thumb {
    width: 15px;
    height: 15px;
    background: #d4d0c8;
    border: 1px solid;
    border-color: #fff #404040 #404040 #fff;
  }
  .scroller output {
    width: 58px;
    text-align: center;
    line-height: 17px;
  }
  .splitter {
    display: flex;
    align-items: center;
    gap: 4px;
    align-self: center;
    width: 40%;
    height: 7px;
    padding: 0 5px;
    background: #c8c8c8;
    border: 1px solid #808080;
  }
  .splitter svg {
    width: 6px;
    height: 4px;
    fill: #000080;
  }
  .splitter span {
    flex: 1;
    border-top: 1px dotted #000;
  }

  /* bottom panel */
  .panel {
    display: flex;
    justify-content: center;
    gap: 5px;
    padding: 8px 0 2px;
    border-bottom: 1px solid #808080;
  }
  .group {
    position: relative;
    box-sizing: border-box;
    height: 72px;
    border: 1px solid #a8a8a0;
    border-radius: 4px;
    box-shadow: inset 1px 1px 0 #e8e8e0;
  }
  .caption {
    position: absolute;
    top: -6px;
    left: 6px;
    line-height: 14px;
    font-size: 12px;
    font-weight: bold;
    color: #000080;
    background: #d4d0c8;
  }
  .row {
    display: flex;
    align-items: center;
  }
  .channel {
    display: flex;
    width: 304px;
    padding: 20px 0 0 7px;
  }
  .channels {
    position: absolute;
    top: -5px;
    left: 5px;
    display: flex;
    gap: 1px;
    background: #d4d0c8;
    padding-right: 8px;
  }
  .channels button {
    width: 26px;
    height: 18px;
    color: #909090;
    background: linear-gradient(#dcdcdc, #b4b4b4);
    border: 1px solid #1c4a78;
    border-radius: 2px;
  }
  .channels .first {
    width: 48px;
    color: #000;
    font-weight: bold;
    background: linear-gradient(#40ff40, #00d800);
  }
  .channels .blue {
    color: #000;
    background: linear-gradient(#5080ff, #2050f0);
  }
  .channel-settings {
    display: flex;
    flex-direction: column;
    gap: 2px;
    width: 206px;
  }
  .sensor {
    display: flex;
    box-sizing: border-box;
    width: 177px;
    height: 21px;
    margin-right: 1px;
    padding: 1px;
    background: #fff;
    border: 1px solid #20d020;
  }
  .sensor input {
    flex: 1;
    min-width: 0;
    padding-left: 2px;
    font-size: 11px;
  }
  .sensor .raised {
    width: 17px;
  }
  .knob {
    width: 90px;
    height: 66px;
  }
  .knob text {
    font-size: 9px;
  }
  .knob .value {
    font-size: 12px;
    text-anchor: middle;
  }
  .channel .knob {
    margin: -12px 0 0 -4px;
  }
  .rate {
    width: 105px;
    padding: 8px 0 0 3px;
  }
  .rate .knob {
    overflow: visible;
  }
  .sync {
    width: 125px;
    padding: 12px 7px 0;
  }
  .sync .row {
    gap: 3px;
    margin-bottom: 6px;
  }
  .sync .caption {
    color: #808080;
  }
  .source {
    width: 47px;
    height: 22px;
    margin-right: 6px;
    background-color: #d4d0c8;
  }
  .control {
    width: 134px;
    padding: 10px 3px 0;
  }
  .control .row {
    gap: 3px;
    margin-bottom: 2px;
  }
  .mode {
    display: flex;
    align-items: center;
    justify-content: center;
    width: 40px;
    height: 28px;
    background: linear-gradient(#f0f0ec, #c8c4bc);
    border: 1px solid #1c4a78;
    border-radius: 2px;
  }
  .mode.off {
    border-color: #909090;
    background: #d0ccc4;
  }
  .mode.on {
    border: 2px solid #e03030;
    background: #fff;
  }
  .mode svg {
    width: 36px;
    height: 24px;
  }
  .mode.start {
    width: 83px;
    gap: 16px;
  }
  .start svg {
    width: 12px;
    height: 20px;
  }
  .version {
    flex: 1;
    padding: 12px 2px 0 0;
    text-align: right;
    font-size: 12px;
    font-weight: bold;
    color: #008000;
  }

  /* status line */
  .status {
    display: flex;
    gap: 2px;
    height: 20px;
    padding: 1px 0;
    font-family: 'DejaVu Sans Condensed', 'DejaVu Sans', sans-serif;
    font-size: 11px;
    border-bottom: 1px solid #fff;
  }
  .status span {
    box-sizing: border-box;
    padding-left: 3px;
    border: 1px solid;
    border-color: #808080 #fff #fff #808080;
    line-height: 16px;
  }
  .state {
    width: 190px;
  }
  .fill {
    flex: 1;
  }
  .build {
    width: 48px;
  }

  /* taskbar */
  .taskbar {
    display: flex;
    align-items: flex-start;
    gap: 2px;
    flex: 1;
    min-height: 25px;
    padding: 0 2px;
    font-family: 'DejaVu Sans Condensed', 'DejaVu Sans', sans-serif;
  }
  .go {
    gap: 1px;
    width: 56px;
    height: 24px;
    margin-right: 7px;
    font-size: 13px;
  }
  .go svg {
    width: 16px;
    height: 16px;
  }
  .task {
    display: flex;
    align-items: center;
    justify-content: center;
    width: 34px;
    height: 24px;
  }
  .task svg,
  .tray svg {
    width: 18px;
    height: 18px;
  }
  .double {
    border-right: 3px double #404040;
  }
  .current {
    background: #fff;
    border: 1px solid;
    border-color: #404040 #fff #fff #404040;
  }
  .lang {
    margin-left: auto;
    padding-right: 6px;
    border-right: 1px solid #808080;
    line-height: 24px;
  }
  .tray {
    display: flex;
    align-items: center;
    gap: 9px;
    box-sizing: border-box;
    height: 24px;
    padding: 0 2px 0 7px;
    border: 1px solid;
    border-color: #808080 #fff #fff #808080;
  }
  .tray .chevron {
    width: 8px;
    height: 10px;
  }
  .tray time {
    padding-left: 8px;
  }
</style>
